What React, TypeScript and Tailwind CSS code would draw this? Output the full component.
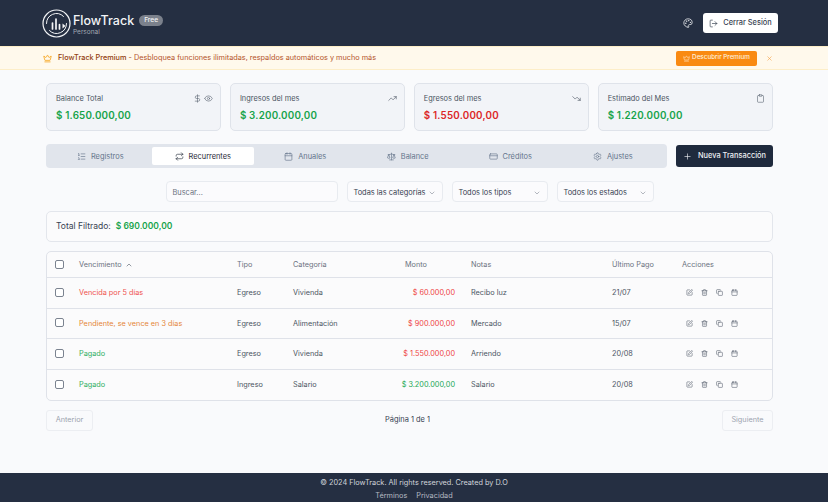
import { Calendar, ChevronDown, ChevronUp, Clipboard, Copy, CreditCard, Crown, DollarSign, Eye, ListOrdered, LogOut, Palette, Plus, Repeat, Scale, Settings, SquarePen, Trash2, TrendingDown, TrendingUp, X } from "lucide-react";

const font = { fontFamily: "Inter, 'Liberation Sans', sans-serif" };

function Logo() {
  return (
    <svg width="29" height="29" viewBox="0 0 29 29" fill="none" stroke="#f3f4f6" strokeLinecap="round">
      <circle cx="14.5" cy="14.5" r="13.5" strokeWidth="1.2" />
      <path d="M24.5 14.5a10 10 0 0 1-17 7.1M4.5 14.5a10 10 0 0 1 17-7.1" strokeWidth="1" />
      <path d="M10.5 14v6M14 10v10M17.5 15.5v4.5" strokeWidth="1.7" />
      <path d="M20.5 14.5l3 2.5-3 2.5z" fill="#f3f4f6" stroke="none" />
    </svg>
  );
}

function StatCard({ title, value, color, icons }: { title: string; value: string; color: string; icons: React.ReactNode }) {
  return (
    <div className="flex h-[48px] flex-col justify-center gap-[3px] rounded-[5px] border-[1.5px] border-[#dfe3ea] bg-[#f2f4f8] pl-[9px] pr-[7px]">
      <div className="flex items-center justify-between text-[7.4px] leading-[14px] text-[#4b5563]">
        <span>{title}</span>
        <span className="flex items-center gap-[2px] text-[#5b6472]">{icons}</span>
      </div>
      <div className={`text-[9.8px] font-semibold leading-[14px] tracking-[0.2px] ${color}`}>{value}</div>
    </div>
  );
}

const tabs = [
  { label: "Registros", icon: ListOrdered },
  { label: "Recurrentes", icon: Repeat, active: true },
  { label: "Anuales", icon: Calendar },
  { label: "Balance", icon: Scale },
  { label: "Créditos", icon: CreditCard },
  { label: "Ajustes", icon: Settings },
];

const rows = [
  { status: "Vencida por 5 días", statusColor: "text-[#ef5350]", tipo: "Egreso", cat: "Vivienda", monto: "$ 60.000,00", montoColor: "text-[#ef4444]", notas: "Recibo luz", pago: "21/07" },
  { status: "Pendiente, se vence en 3 días", statusColor: "text-[#e5873a]", tipo: "Egreso", cat: "Alimentación", monto: "$ 900.000,00", montoColor: "text-[#ef4444]", notas: "Mercado", pago: "15/07" },
  { status: "Pagado", statusColor: "text-[#2fae62]", tipo: "Egreso", cat: "Vivienda", monto: "$ 1.550.000,00", montoColor: "text-[#ef4444]", notas: "Arriendo", pago: "20/08" },
  { status: "Pagado", statusColor: "text-[#2fae62]", tipo: "Ingreso", cat: "Salario", monto: "$ 3.200.000,00", montoColor: "text-[#22a855]", notas: "Salario", pago: "20/08" },
];

function Check() {
  return <span className="mb-[1px] block h-[9px] w-[9px] rounded-[2px] border border-[#7b8390] bg-white" />;
}

function Select({ label, w }: { label: string; w: string }) {
  return (
    <div className={`flex h-[21px] items-center justify-between whitespace-nowrap rounded-[4px] border border-[#e8ebf0] bg-[#fbfbfd] pl-[6px] pr-[6px] pt-[2px] text-[7.4px] text-[#374151] ${w}`}>
      <span>{label}</span>
      <ChevronDown size={8} strokeWidth={1.5} className="text-[#6b7280]" />
    </div>
  );
}

export default function App() {
  return (
    <div style={font} className="flex h-[502px] w-[828px] flex-col overflow-hidden bg-[#f9fafc]">
      <header className="flex h-[46px] shrink-0 items-center justify-between bg-[#252f42] pl-[42px] pr-[50px]">
        <div className="flex items-center">
          <Logo />
          <div className="ml-[2px] pt-[2px]">
            <div className="flex items-center gap-[5px]">
              <span className="text-[12.5px] font-medium leading-[15px] text-[#f3f4f6]">FlowTrack</span>
              <span className="rounded-full bg-[#7b818c] px-[5px] text-[6.6px] font-medium leading-[11px] text-[#f3f4f6]">Free</span>
            </div>
            <div className="text-[6.5px] leading-[8px] text-[#a3a8b2]">Personal</div>
          </div>
        </div>
        <div className="flex items-center gap-[10px]">
          <Palette size={10} strokeWidth={2} className="text-[#e5e7eb]" />
          <button className="flex h-[20px] w-[75px] items-center justify-center gap-[5px] rounded-[3px] bg-white text-[7.4px] font-medium text-[#374151]">
            <LogOut size={9} strokeWidth={1.8} /> Cerrar Sesión
          </button>
        </div>
      </header>

      <div className="flex h-[24px] shrink-0 items-center justify-between border-y border-[#fdeec8] bg-[#fff9ec] pl-[43px] pr-[55px]">
        <div className="flex items-center gap-[6px] text-[7.3px] text-[#b4532a]">
          <Crown size={9} strokeWidth={2} className="text-[#f59e0b]" />
          <span><span className="font-medium text-[#92400e]">FlowTrack Premium</span> - Desbloquea funciones ilimitadas, respaldos automáticos y mucho más</span>
        </div>
        <div className="flex items-center gap-[9px]">
          <button className="flex h-[15px] w-[81px] items-center justify-center gap-[2px] rounded-[2px] bg-[#f98a12] text-[6.3px] font-medium text-[#fff1dc]">
            <Crown size={7} strokeWidth={1.8} /> Descubrir Premium
          </button>
          <X size={7} strokeWidth={2} className="text-[#f59e42]" />
        </div>
      </div>

      <main className="flex flex-1 flex-col pl-[46px] pr-[55px] pt-[13px]">
        <div className="grid grid-cols-4 gap-[8.5px]">
          <StatCard title="Balance Total" value="$ 1.650.000,00" color="text-[#16a34a]" icons={<><DollarSign size={9} strokeWidth={1.6} /><Eye size={9} strokeWidth={1.6} /></>} />
          <StatCard title="Ingresos del mes" value="$ 3.200.000,00" color="text-[#16a34a]" icons={<TrendingUp size={9} strokeWidth={1.8} />} />
          <StatCard title="Egresos del mes" value="$ 1.550.000,00" color="text-[#dc2626]" icons={<TrendingDown size={9} strokeWidth={1.8} />} />
          <StatCard title="Estimado del Mes" value="$ 1.220.000,00" color="text-[#16a34a]" icons={<Clipboard size={9} strokeWidth={1.6} />} />
        </div>

        <div className="mt-[13px] flex items-center gap-[9px]">
          <div className="grid h-[24px] w-[621px] grid-cols-6 rounded-[4px] bg-[#e1e5ec] p-[3px]">
            {tabs.map((t) => {
              const Icon = t.icon;
              return (
                <div key={t.label} className={`flex items-center justify-center gap-[5px] rounded-[2px] text-[7.4px] ${t.active ? "bg-white text-[#1f2937]" : "text-[#64748b]"}`}>
                  <Icon size={9} strokeWidth={1.7} />
                  <span className="pt-[1px]">{t.label}</span>
                </div>
              );
            })}
          </div>
          <button className="flex h-[22px] flex-1 items-center justify-center gap-[6px] rounded-[3px] bg-[#1f2a3d] text-[7.4px] font-medium text-[#eef0f4]">
            <Plus size={9} strokeWidth={1.7} /> Nueva Transacción
          </button>
        </div>

        <div className="mt-[13px] flex justify-center gap-[9px]">
          <div className="flex h-[21px] w-[172px] items-center rounded-[4px] border border-[#e8ebf0] bg-[#fbfbfd] px-[6px] pt-[2px] text-[7.4px] text-[#6b7280]">Buscar...</div>
          <Select label="Todas las categorías" w="w-[96px]" />
          <Select label="Todos los tipos" w="w-[96px]" />
          <Select label="Todos los estados" w="w-[97px]" />
        </div>

        <div className="mt-[9px] flex h-[31px] items-center gap-[5px] rounded-[5px] border-[1.5px] border-[#e3e6ec] bg-[#fbfbfc] pl-[9px] pr-[8px] text-[8.5px]">
          <span className="text-[#374151]">Total Filtrado:</span>
          <span className="font-semibold text-[#16a34a]">$ 690.000,00</span>
        </div>

        <div className="mt-[9px] overflow-hidden rounded-[5px] border border-[#dfe2e9] bg-[#fbfbfc]">
          <table className="w-[725px] table-fixed border-collapse text-left text-[7.3px] text-[#4b5563]">
            <thead>
              <tr className="h-[25.5px] border-b border-[#dfe2e9] text-[#6b7280]">
                <th className="w-[24px] pl-[8px] font-normal"><Check /></th>
                <th className="w-[158px] px-[8px] pt-[1px] font-normal"><span className="flex items-center gap-[3px]">Vencimiento <ChevronUp size={8} strokeWidth={1.8} className="text-[#4b5563]" /></span></th>
                <th className="w-[56px] px-[8px] pt-[1px] font-normal">Tipo</th>
                <th className="w-[90px] px-[8px] pt-[1px] font-normal">Categoría</th>
                <th className="w-[88px] px-[8px] pt-[1px] text-left font-normal"><span className="ml-[22px]">Monto</span></th>
                <th className="w-[141px] px-[8px] pt-[1px] font-normal">Notas</th>
                <th className="w-[70px] px-[8px] pt-[1px] font-normal">Último Pago</th>
                <th className="px-[8px] pt-[1px] font-normal">Acciones</th>
              </tr>
            </thead>
            <tbody>
              {rows.map((r, i) => (
                <tr key={i} className={`h-[30.5px] ${i < 3 ? "border-b border-[#dfe2e9]" : ""}`}>
                  <td className="pl-[8px]"><Check /></td>
                  <td className={`px-[8px] pt-[2px] ${r.statusColor}`}>{r.status}</td>
                  <td className="px-[8px] pt-[2px]">{r.tipo}</td>
                  <td className="px-[8px] pt-[2px]">{r.cat}</td>
                  <td className={`px-[8px] pt-[2px] text-right ${r.montoColor}`}>{r.monto}</td>
                  <td className="px-[8px] pt-[2px]">{r.notas}</td>
                  <td className="px-[8px] pt-[2px]">{r.pago}</td>
                  <td className="px-[8px]">
                    <div className="ml-[4px] flex items-center gap-[8px] text-[#5b6472]">
                      <SquarePen size={7} strokeWidth={2} />
                      <Trash2 size={7} strokeWidth={2} />
                      <Copy size={7} strokeWidth={2} />
                      <Calendar size={7} strokeWidth={2} />
                    </div>
                  </td>
                </tr>
              ))}
            </tbody>
          </table>
        </div>

        <div className="mt-[9px] flex items-center justify-between">
          <button className="flex h-[21px] w-[47px] items-center justify-center rounded-[3px] border border-[#eceef2] text-[7.3px] text-[#9ca3af]">Anterior</button>
          <span className="text-[7.4px] text-[#374151]">Página 1 de 1</span>
          <button className="flex h-[21px] w-[51px] items-center justify-center rounded-[3px] border border-[#eceef2] text-[7.3px] text-[#9ca3af]">Siguiente</button>
        </div>
      </main>

      <footer className="flex h-[29px] shrink-0 flex-col items-center justify-center bg-[#252f42] pt-[2px] text-[7.3px] leading-[13px] text-[#d1d5db]">
        <div>© 2024 FlowTrack. All rights reserved. Created by D.O</div>
        <div className="flex gap-[9px] text-[#b5bac3]"><span>Términos</span><span>Privacidad</span></div>
      </footer>
    </div>
  );
}
